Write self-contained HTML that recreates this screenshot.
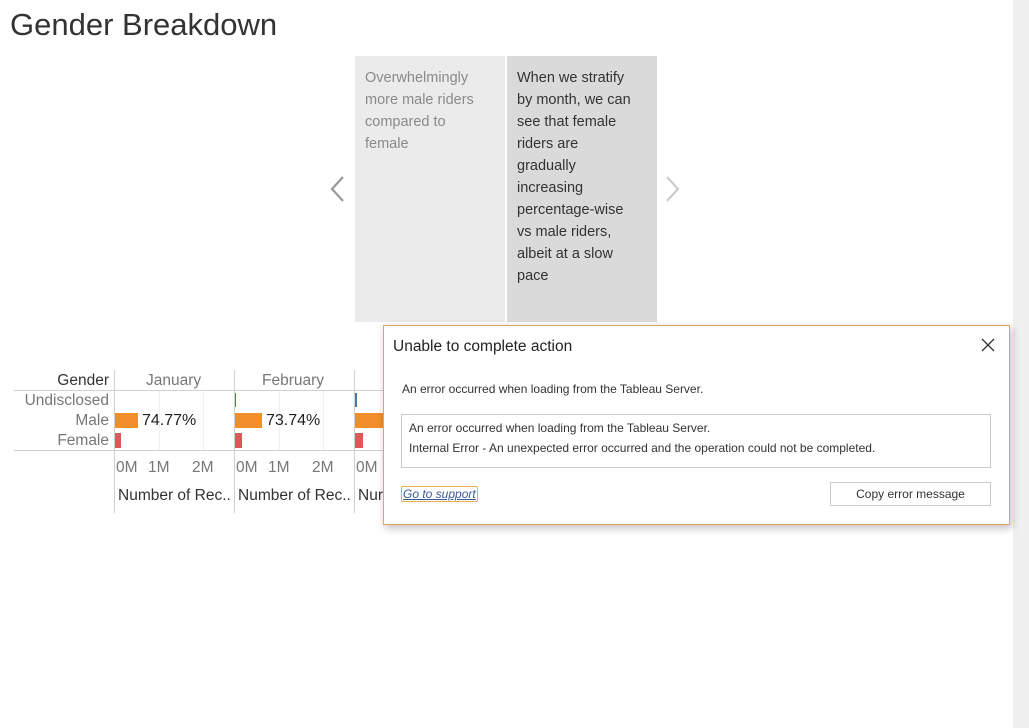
<!DOCTYPE html>
<html><head><style>
body{margin:0;width:1029px;height:728px;background:#fff;position:relative;overflow:hidden;font-family:"Liberation Sans",sans-serif}
.a{position:absolute}
.p{position:absolute;top:56px;width:150px;height:266px;box-sizing:border-box;padding:11px 10px;font-size:14.5px;line-height:22px;white-space:nowrap}
.t{font-size:15.5px;color:#777;position:absolute}
.d{font-size:12px;color:#333}
</style></head><body>
<div class="a" style="left:10px;top:7px;font-size:31px;color:#333">Gender Breakdown</div>
<div class="a" style="right:0;top:0;width:16px;height:728px;background:#f0f0f0"></div>
<div class="p" style="left:355px;background:#ebebeb;color:#8a8a8a">Overwhelmingly<br>more male riders<br>compared to<br>female</div>
<div class="p" style="left:507px;background:#dadada;color:#333">When we stratify<br>by month, we can<br>see that female<br>riders are<br>gradually<br>increasing<br>percentage-wise<br>vs male riders,<br>albeit at a slow<br>pace</div>
<svg class="a" style="left:326px;top:174px" width="20" height="30"><path d="M17 3 L6 15 L17 27" stroke="#999" stroke-width="2.2" fill="none"/></svg>
<svg class="a" style="left:664px;top:174px" width="20" height="30"><path d="M3 3 L14 15 L3 27" stroke="#ccc" stroke-width="2.2" fill="none"/></svg>

<div class="a" style="left:14px;top:390px;width:370px;height:1px;background:#d0d0d0"></div>
<div class="a" style="left:14px;top:450px;width:370px;height:1px;background:#d0d0d0"></div>
<div class="a" style="left:114px;top:370px;width:1px;height:143px;background:#d0d0d0"></div>
<div class="a" style="left:234px;top:370px;width:1px;height:143px;background:#d0d0d0"></div>
<div class="a" style="left:354px;top:370px;width:1px;height:143px;background:#d0d0d0"></div>
<div class="a" style="left:159px;top:391px;width:1px;height:59px;background:#f0f0f0"></div>
<div class="a" style="left:203px;top:391px;width:1px;height:59px;background:#f0f0f0"></div>
<div class="a" style="left:279px;top:391px;width:1px;height:59px;background:#f0f0f0"></div>
<div class="a" style="left:323px;top:391px;width:1px;height:59px;background:#f0f0f0"></div>
<div class="t" style="right:920px;top:372px;color:#333">Gender</div>
<div class="t" style="left:146px;top:372px">January</div>
<div class="t" style="left:262px;top:372px">February</div>
<div class="t" style="right:920px;top:392px">Undisclosed</div>
<div class="t" style="right:920px;top:412px">Male</div>
<div class="t" style="right:920px;top:432px">Female</div>
<div class="a" style="left:115px;top:413px;width:23px;height:15px;background:#f28e2b"></div>
<div class="a" style="left:235px;top:413px;width:27px;height:15px;background:#f28e2b"></div>
<div class="a" style="left:355px;top:413px;width:30px;height:15px;background:#f28e2b"></div>
<div class="a" style="left:115px;top:433px;width:6px;height:15px;background:#e15759"></div>
<div class="a" style="left:235px;top:433px;width:7px;height:15px;background:#e15759"></div>
<div class="a" style="left:355px;top:433px;width:8px;height:15px;background:#e15759"></div>
<div class="a" style="left:235px;top:393px;width:1px;height:14px;background:#4e79a7"></div>
<div class="a" style="left:355px;top:393px;width:2px;height:14px;background:#4e79a7"></div>
<div class="t" style="left:142px;top:412px;color:#222;font-size:16px">74.77%</div>
<div class="t" style="left:266px;top:412px;color:#222;font-size:16px">73.74%</div>
<div class="t" style="left:116px;top:459px">0M</div><div class="t" style="left:148px;top:459px">1M</div><div class="t" style="left:192px;top:459px">2M</div>
<div class="t" style="left:236px;top:459px">0M</div><div class="t" style="left:268px;top:459px">1M</div><div class="t" style="left:312px;top:459px">2M</div>
<div class="t" style="left:356px;top:459px">0M</div>
<div class="t" style="left:118px;top:487px;color:#333">Number of Rec..</div>
<div class="t" style="left:238px;top:487px;color:#333">Number of Rec..</div>
<div class="t" style="left:358px;top:487px;color:#333">Nur</div>

<div class="a" style="left:383px;top:325px;width:625px;height:198px;background:#fff;border:1px solid #d9a85a;box-shadow:2px 3px 8px rgba(0,0,0,.25)">
 <div class="a" style="left:9px;top:12px;font-size:15.5px;color:#222">Unable to complete action</div>
 <svg class="a" style="left:597px;top:12px" width="14" height="14"><path d="M1 1L13 13M13 1L1 13" stroke="#333" stroke-width="1.3"/></svg>
 <div class="a d" style="left:18px;top:56px">An error occurred when loading from the Tableau Server.</div>
 <div class="a" style="left:17px;top:88px;width:588px;height:52px;border:1px solid #ccc"></div>
 <div class="a d" style="left:25px;top:95px">An error occurred when loading from the Tableau Server.</div>
 <div class="a d" style="left:25px;top:115px">Internal Error - An unexpected error occurred and the operation could not be completed.</div>
 <div class="a" style="left:17px;top:160px;font-size:12px;color:#3b5998;font-style:italic;text-decoration:underline;border:1px solid #e8b04a;border-radius:2px;padding:0 1px">Go to support</div>
 <div class="a" style="left:446px;top:156px;width:159px;height:22px;border:1px solid #ccc;font-size:12px;color:#333;text-align:center;line-height:22px">Copy error message</div>
</div>
</body></html>
